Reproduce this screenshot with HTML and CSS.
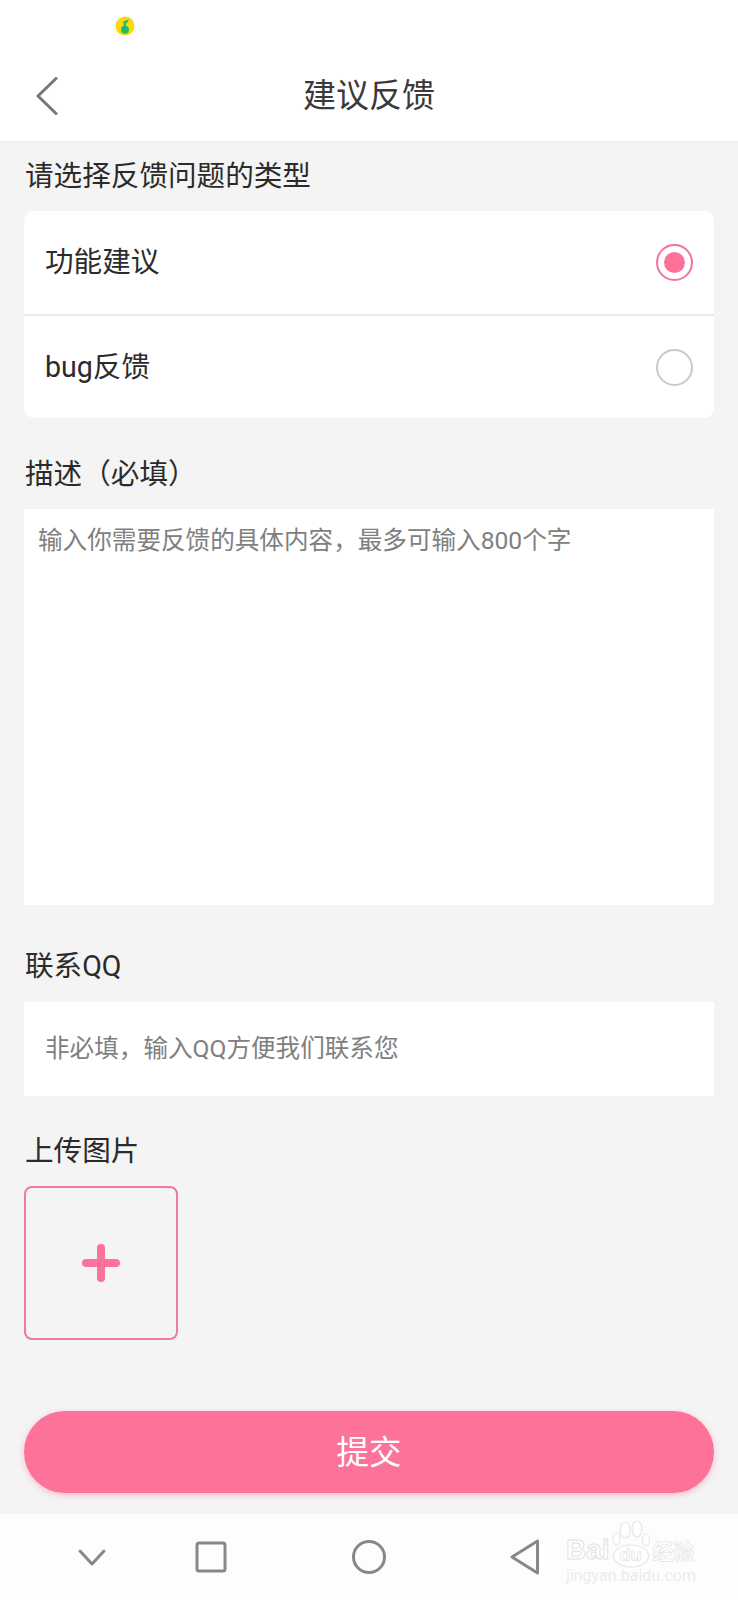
FILE: index.html
```html
<!DOCTYPE html>
<html lang="zh-CN">
<head>
  <meta charset="UTF-8">
  <meta name="viewport" content="width=device-width, initial-scale=1.0">
  <title>建议反馈</title>
  <link rel="stylesheet" href="styles.css">
</head>
<body>
  <div class="app">
    <div class="status">
      <svg class="qq-music" width="20" height="20" viewBox="0 0 20 20">
        <circle cx="10" cy="10" r="9.5" fill="#fbd90f"/>
        <path d="M9.4 13 L8.2 5.8 L14 3 L12 7 L10.6 7.6 L11.6 13 Z" fill="#22b86a"/>
        <circle cx="10" cy="13.8" r="4" fill="#22b86a"/>
      </svg>
    </div>

    <header class="topbar">
      <svg class="back" width="22" height="38" viewBox="0 0 22 38">
        <path d="M20 1.5 L2 19 L20 36.5" fill="none" stroke="#777" stroke-width="3" stroke-linecap="round" stroke-linejoin="round"/>
      </svg>
      <h1>建议反馈</h1>
    </header>

    <main class="content">
      <section class="section section-first">
        <div class="label">请选择反馈问题的类型</div>
        <div class="options">
          <div class="option option-top">
            <span class="option-text">功能建议</span>
            <span class="radio radio-on"></span>
          </div>
          <div class="option option-bottom">
            <span class="option-text">bug反馈</span>
            <span class="radio"></span>
          </div>
        </div>
      </section>

      <section class="section section-desc">
        <div class="label">描述（必填）</div>
        <div class="textbox">输入你需要反馈的具体内容，最多可输入800个字</div>
      </section>

      <section class="section section-qq">
        <div class="label">联系QQ</div>
        <div class="inputbox">非必填，输入QQ方便我们联系您</div>
      </section>

      <section class="section">
        <div class="label">上传图片</div>
        <div class="upload"><span class="plus"></span></div>
      </section>

      <button class="submit">提交</button>
    </main>

    <nav class="navbar">
      <svg class="nav-icon" width="30" height="20" viewBox="0 0 30 20">
        <path d="M3 3 L15 16 L27 3" fill="none" stroke="#888" stroke-width="3" stroke-linecap="round" stroke-linejoin="round"/>
      </svg>
      <svg class="nav-icon" width="32" height="32" viewBox="0 0 32 32">
        <rect x="2" y="2" width="28" height="28" rx="2" fill="none" stroke="#888" stroke-width="3"/>
      </svg>
      <svg class="nav-icon" width="36" height="36" viewBox="0 0 36 36">
        <circle cx="18" cy="18" r="15.5" fill="none" stroke="#888" stroke-width="3"/>
      </svg>
      <svg class="nav-icon" width="30" height="36" viewBox="0 0 30 36">
        <path d="M27.5 2 L2 18 L27.5 34 Z" fill="none" stroke="#888" stroke-width="3" stroke-linejoin="round"/>
      </svg>

      <div class="watermark">
        <svg class="paw" width="40" height="50" viewBox="0 0 40 50">
          <g fill="#fff" stroke="#e6e6e6" stroke-width="1.2">
            <ellipse cx="13" cy="10" rx="5" ry="8"/>
            <ellipse cx="25" cy="9" rx="5" ry="8"/>
            <ellipse cx="4.5" cy="19" rx="3.5" ry="6"/>
            <ellipse cx="34" cy="20" rx="3.5" ry="6"/>
            <ellipse cx="19" cy="36" rx="17.5" ry="11"/>
          </g>
        </svg>
        <div class="wm-logo"><span>Bai</span><span class="wm-du">du</span><span class="wm-cn">经验</span></div>
        <div class="wm-url">jingyan.baidu.com</div>
      </div>
    </nav>
  </div>
</body>
</html>
```

FILE: styles.css
```css
* {
  box-sizing: border-box;
}
body {
  margin: 0;
  background: #f4f4f4;
  font-family: Roboto, 'Noto Sans CJK SC', sans-serif;
  color: #2b2b2b;
}
.app {
  width: 738px;
  height: 1600px;
  display: flex;
  flex-direction: column;
  overflow: hidden;
}
.status {
  height: 52px;
  background: #fff;
  padding: 16px 0 0 115px;
}
.qq-music {
  display: block;
}
.topbar {
  height: 90px;
  background: #fff;
  border-bottom: 1px solid #ececec;
  position: relative;
  display: flex;
  align-items: center;
  justify-content: center;
  padding-bottom: 2px;
}
.topbar h1 {
  margin: 0;
  font-size: 33px;
  font-weight: 400;
  line-height: 44px;
  color: #3a3a3a;
}
.back {
  position: absolute;
  left: 36px;
  top: 25px;
}
.content {
  flex: 1;
  padding: 0 24px;
  display: flex;
  flex-direction: column;
}
.section {
  margin-top: 35px;
}
.section-first {
  margin-top: 14px;
}
.section-desc {
  margin-top: 36px;
}
.section-qq {
  margin-top: 41px;
}
.label {
  font-size: 28.6px;
  line-height: 40px;
  padding-left: 1px;
  margin-bottom: 15px;
}
.options {
  background: #fff;
  border-radius: 10px;
}
.option {
  display: flex;
  align-items: center;
  justify-content: space-between;
  padding: 0 21px 0 21px;
  font-size: 28.6px;
}
.option-text {
  margin-bottom: 6px;
}
.option-top {
  height: 105px;
  border-bottom: 2px solid #e9e9e9;
}
.option-bottom {
  height: 102px;
}
.radio {
  width: 37px;
  height: 37px;
  border-radius: 50%;
  border: 2px solid #c9c9c9;
  display: flex;
  align-items: center;
  justify-content: center;
}
.radio-on {
  border-color: #f0759b;
}
.radio-on::after {
  content: "";
  width: 21px;
  height: 21px;
  border-radius: 50%;
  background: #fd7299;
}
.textbox {
  height: 396px;
  background: #fff;
  padding: 14px 14px;
  font-size: 24.6px;
  line-height: 36px;
  color: #808080;
}
.inputbox {
  height: 94px;
  margin-top: 16px;
  background: #fff;
  padding: 0 21px 6px;
  display: flex;
  align-items: center;
  font-size: 24.6px;
  color: #808080;
}
.upload {
  width: 154px;
  height: 154px;
  border: 2px solid #ef7a9e;
  border-radius: 8px;
  display: flex;
  align-items: center;
  justify-content: center;
}
.plus {
  width: 38px;
  height: 38px;
  position: relative;
  display: block;
}
.plus::before,
.plus::after {
  content: "";
  position: absolute;
  background: #fd7299;
  border-radius: 4px;
}
.plus::before {
  left: 0;
  right: 0;
  top: 15px;
  height: 8px;
}
.plus::after {
  top: 0;
  bottom: 0;
  left: 15px;
  width: 8px;
}
.submit {
  display: block;
  width: 100%;
  height: 82px;
  margin-top: 71px;
  padding: 0 0 6px;
  border: none;
  border-radius: 41px;
  background: #fd7299;
  box-shadow: 0 2px 6px rgba(253, 114, 153, 0.45);
  color: #fff;
  font-family: inherit;
  font-size: 32.5px;
}
.navbar {
  height: 86px;
  background: #fdfdfd;
  position: relative;
  flex: none;
}
.nav-icon {
  position: absolute;
}
.nav-icon:nth-child(1) {
  left: 77px;
  top: 34px;
}
.nav-icon:nth-child(2) {
  left: 195px;
  top: 27px;
}
.nav-icon:nth-child(3) {
  left: 351px;
  top: 25px;
}
.nav-icon:nth-child(4) {
  left: 510px;
  top: 25px;
}
.watermark {
  position: absolute;
  left: 566px;
  top: 6px;
  width: 134px;
  color: #fff;
}
.paw {
  position: absolute;
  left: 46px;
  top: 0;
}
.wm-logo {
  position: absolute;
  left: 0;
  top: 15px;
  height: 30px;
  display: flex;
  align-items: center;
  font-family: 'Liberation Sans', sans-serif;
  font-size: 28px;
  line-height: 30px;
  font-weight: 700;
  color: #fff;
  -webkit-text-stroke: 1px #e2e2e2;
  white-space: nowrap;
}
.wm-du {
  font-size: 18px;
  line-height: 20px;
  width: 36px;
  margin-left: 3px;
  margin-top: 10px;
  text-align: center;
  -webkit-text-stroke: 0.6px #dcdcdc;
}
.wm-cn {
  font-family: 'Noto Sans CJK SC', sans-serif;
  font-size: 21px;
  margin-left: 4px;
  -webkit-text-stroke: 0.6px #e2e2e2;
}
.wm-url {
  position: absolute;
  left: 0;
  top: 46px;
  font-size: 16px;
  line-height: 20px;
  color: #ececec;
  white-space: nowrap;
}
```
